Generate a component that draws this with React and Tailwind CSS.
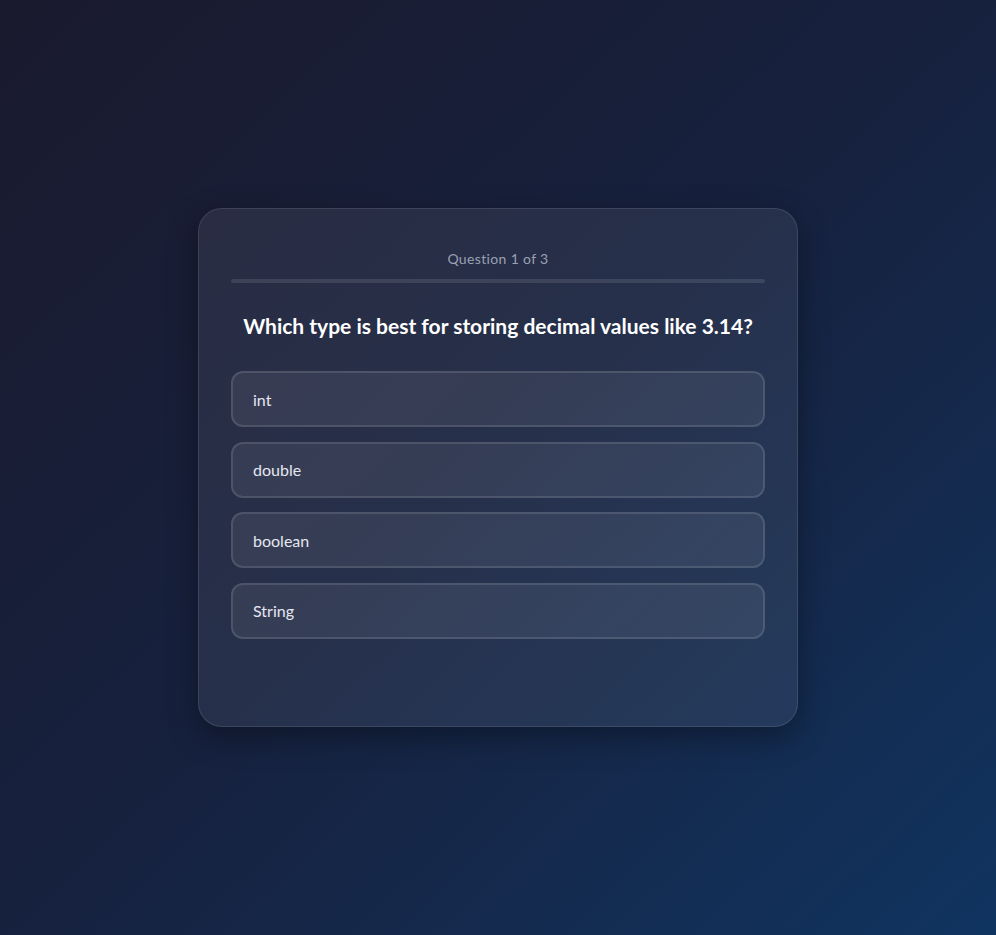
import { useState } from "react";

const questions = [
    {
        q: "Which type is best for storing decimal values like 3.14?",
        options: ["int", "double", "boolean", "String"],
    },
];

function App() {
    const [current] = useState(0);
    const item = questions[current];

    return (
        <div
            className="min-h-screen w-full flex items-start justify-center bg-gradient-to-br from-[#1a1a2e] via-[#16213e] to-[#0f3460] pt-[208px]"
            style={{ fontFamily: 'Lato, "Noto Sans", sans-serif' }}
        >
            <div className="w-[600px] min-h-[519px] rounded-[24px] border border-white/10 bg-white/[0.07] px-8 pt-[40px] pb-8 shadow-[0_10px_30px_rgba(0,0,0,0.35)]">
                <p className="text-center text-[14px] leading-[20px] tracking-wide text-[#9aa0b4]">
                    Question {current + 1} of 3
                </p>
                <div className="mt-[10px] h-[4px] w-full rounded-full bg-white/10" />

                <h2 className="mt-[27px] text-center text-[21px] font-bold leading-[32px] text-white">
                    {item.q}
                </h2>

                <div className="mt-[29px] flex flex-col gap-[14.5px]">
                    {item.options.map((opt) => (
                        <button
                            key={opt}
                            className="h-[56px] w-full rounded-[12px] border-2 border-white/[0.12] bg-white/[0.07] px-5 pt-[1px] text-left text-[16px] text-[#e5e7ef]"
                        >
                            {opt}
                        </button>
                    ))}
                </div>
            </div>
        </div>
    );
}

export default App;
